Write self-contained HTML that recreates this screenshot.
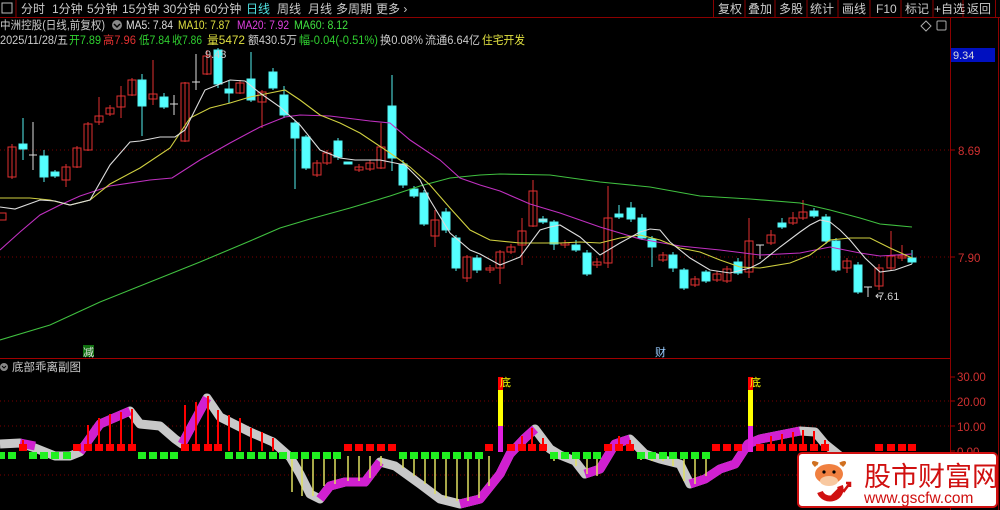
<!DOCTYPE html>
<html><head><meta charset="utf-8"><style>
body{margin:0;background:#000;width:1000px;height:510px;overflow:hidden;font-family:"Liberation Sans","Noto Sans CJK SC",sans-serif}
svg{position:absolute;left:0;top:0}
</style></head><body>
<svg width="1000" height="510" viewBox="0 0 1000 510" xmlns="http://www.w3.org/2000/svg" font-family="Liberation Sans, Noto Sans CJK SC, sans-serif">
<rect width="1000" height="510" fill="#000"/>
<!-- toolbar -->
<line x1="0" y1="17.5" x2="1000" y2="17.5" stroke="#8b0000"/>
<rect x="2" y="3" width="10" height="10" fill="none" stroke="#bbb"/><line x1="16" y1="0" x2="16" y2="17" stroke="#8b0000"/>
<g font-size="12" fill="#ccc">
<text x="21" y="13">分时</text><text x="52" y="13">1分钟</text><text x="87" y="13">5分钟</text><text x="122" y="13">15分钟</text><text x="163" y="13">30分钟</text><text x="204" y="13">60分钟</text>
<text x="246" y="13" fill="#4fe0e0">日线</text><text x="277" y="13">周线</text><text x="308" y="13">月线</text><text x="336" y="13">多周期</text><text x="376" y="13">更多 ›</text>
<g stroke="#8b0000" fill="none"><rect x="713.5" y="-1" width="282" height="18.5"/><line x1="745" y1="0" x2="745" y2="17"/><line x1="775" y1="0" x2="775" y2="17"/><line x1="807" y1="0" x2="807" y2="17"/><line x1="838" y1="0" x2="838" y2="17"/><line x1="870" y1="0" x2="870" y2="17"/><line x1="901" y1="0" x2="901" y2="17"/><line x1="933" y1="0" x2="933" y2="17"/><line x1="963" y1="0" x2="963" y2="17"/></g>
<text x="718" y="13">复权</text><text x="748" y="13">叠加</text><text x="779" y="13">多股</text><text x="810" y="13">统计</text><text x="842" y="13">画线</text><text x="876" y="13">F10</text><text x="905" y="13">标记</text><text x="934" y="13">+自选</text><text x="967" y="13">返回</text>
</g>
<!-- info lines -->
<g font-size="11.5" lengthAdjust="spacingAndGlyphs">
<text x="0" y="29" fill="#ccc" textLength="105" lengthAdjust="spacingAndGlyphs">中洲控股(日线,前复权)</text>
<circle cx="117" cy="25" r="5" fill="#888"/><path d="M114 24l3 3 3-3" stroke="#000" fill="none" stroke-width="1.5"/>
<text x="126" y="29" fill="#ddd" textLength="47" lengthAdjust="spacingAndGlyphs">MA5: 7.84</text><text x="178" y="29" fill="#e0e040" textLength="52" lengthAdjust="spacingAndGlyphs">MA10: 7.87</text><text x="237" y="29" fill="#e040e0" textLength="52" lengthAdjust="spacingAndGlyphs">MA20: 7.92</text><text x="294" y="29" fill="#40e040" textLength="54" lengthAdjust="spacingAndGlyphs">MA60: 8.12</text>
<text x="0" y="44" fill="#ccc" textLength="68" lengthAdjust="spacingAndGlyphs">2025/11/28/五</text>
<text x="69" y="44" fill="#30d030" textLength="32" lengthAdjust="spacingAndGlyphs">开7.89</text><text x="103" y="44" fill="#e03030" textLength="33" lengthAdjust="spacingAndGlyphs">高7.96</text><text x="139" y="44" fill="#30d030" textLength="31" lengthAdjust="spacingAndGlyphs">低7.84</text><text x="172" y="44" fill="#30d030" textLength="30" lengthAdjust="spacingAndGlyphs">收7.86</text><text x="207" y="44" fill="#e0e040" textLength="38" lengthAdjust="spacingAndGlyphs">量5472</text><text x="248" y="44" fill="#ccc" textLength="49" lengthAdjust="spacingAndGlyphs">额430.5万</text><text x="299" y="44" fill="#30d030" textLength="79" lengthAdjust="spacingAndGlyphs">幅-0.04(-0.51%)</text><text x="380" y="44" fill="#ccc" textLength="43" lengthAdjust="spacingAndGlyphs">换0.08%</text><text x="425" y="44" fill="#ccc" textLength="55" lengthAdjust="spacingAndGlyphs">流通6.64亿</text><text x="482" y="44" fill="#e0e040" textLength="43" lengthAdjust="spacingAndGlyphs">住宅开发</text>
</g>
<path d="M921 26l5-5 5 5-5 5z" fill="none" stroke="#aaa"/><rect x="937" y="21" width="9" height="9" rx="1" fill="none" stroke="#aaa"/>
<!-- axis -->
<line x1="950.5" y1="18" x2="950.5" y2="510" stroke="#8b0000"/>
<line x1="998.5" y1="18" x2="998.5" y2="510" stroke="#8b0000"/>
<line x1="0" y1="358.5" x2="950" y2="358.5" stroke="#a00000"/>
<rect x="951" y="48" width="44" height="14" fill="#0010c0"/><text x="953" y="59" font-size="11" fill="#ddd">9.34</text>
<g stroke="#7a0000" stroke-dasharray="1,3"><line x1="0" y1="150" x2="950" y2="150"/><line x1="0" y1="257" x2="950" y2="257"/>
<line x1="0" y1="401" x2="950" y2="401"/><line x1="0" y1="426" x2="950" y2="426"/><line x1="0" y1="475" x2="950" y2="475"/></g>
<g font-size="11.5" fill="#d03030"><text x="958" y="155">8.69</text><text x="958" y="262">7.90</text>
<text x="957" y="381">30.00</text><text x="957" y="406">20.00</text><text x="957" y="431">10.00</text><text x="957" y="456">0.00</text></g>
<g stroke="#a00000"><line x1="950" y1="150" x2="955" y2="150"/><line x1="950" y1="257" x2="955" y2="257"/><line x1="950" y1="377" x2="955" y2="377"/><line x1="950" y1="401" x2="955" y2="401"/><line x1="950" y1="426" x2="955" y2="426"/><line x1="950" y1="451" x2="955" y2="451"/></g>
<!-- candles red hollow -->
<g stroke="#e03030" fill="none" stroke-width="1">
<path d="M12 144v35M66 164v23M77 146v22M88 122v29M99 97v28M110 105v11M121 86v32M132 78v18M153 60v45M185 82v60M207 50v25M240 80v14M262 90v38M317 160v17M327 150v15M359 164v8M370 160v11M381 123v46M435 210v37M467 255v27M490 265v8M500 250v34M511 244v10M522 218v47M533 180v47M565 240v8M597 258v10M608 186v82M663 252v10M695 276v11M717 271v11M727 266v17M749 218v60M771 230v15M793 212v13M803 200v20M847 258v15M879 264v26M891 231v39M902 245v16"/>
<rect x="-2" y="213" width="8" height="7"/><rect x="8" y="147" width="8" height="30"/><rect x="62" y="167" width="8" height="13"/><rect x="73" y="148" width="8" height="19"/><rect x="84" y="124" width="8" height="26"/><rect x="95" y="116" width="8" height="6"/><rect x="106" y="108" width="8" height="6"/><rect x="117" y="96" width="8" height="11"/><rect x="128" y="80" width="8" height="15"/><rect x="149" y="94" width="8" height="5"/><rect x="181" y="83" width="8" height="58"/><rect x="203" y="56" width="8" height="18"/><rect x="236" y="83" width="8" height="10"/><rect x="258" y="92" width="8" height="10"/><rect x="313" y="163" width="8" height="12"/><rect x="323" y="153" width="8" height="10"/><rect x="355" y="167" width="8" height="3"/><rect x="366" y="163" width="8" height="6"/><rect x="377" y="147" width="8" height="21"/><rect x="431" y="220" width="8" height="16"/><rect x="463" y="257" width="8" height="21"/><rect x="486" y="268" width="8" height="2"/><rect x="496" y="252" width="8" height="16"/><rect x="507" y="247" width="8" height="5"/><rect x="518" y="231" width="8" height="14"/><rect x="529" y="191" width="8" height="35"/><rect x="561" y="243" width="8" height="2"/><rect x="593" y="262" width="8" height="3"/><rect x="604" y="218" width="8" height="45"/><rect x="659" y="255" width="8" height="5"/><rect x="691" y="279" width="8" height="6"/><rect x="713" y="274" width="8" height="6"/><rect x="723" y="269" width="8" height="12"/><rect x="745" y="241" width="8" height="31"/><rect x="767" y="235" width="8" height="8"/><rect x="789" y="218" width="8" height="5"/><rect x="799" y="212" width="8" height="6"/><rect x="843" y="261" width="8" height="7"/><rect x="875" y="268" width="8" height="18"/><rect x="887" y="256" width="8" height="12"/><rect x="898" y="256" width="8" height="2"/>
</g>
<!-- cyan -->
<g stroke="#54f0f0" fill="#54ffff">
<path d="M23 118v42M44 150v32M55 170v8M142 74v62M164 93v16M218 48v40M229 80v23M251 52v50M273 68v22M284 86v32M295 120v69M306 135v35M338 138v22M392 75v96M403 160v28M414 186v12M424 190v36M446 208v25M456 235v36M477 255v18M543 216v8M554 220v30M576 240v12M587 250v26M619 205v14M631 202v20M642 214v26M652 236v31M673 252v20M684 268v22M706 270v13M738 258v17M782 218v11M814 208v10M826 214v30M836 238v34M858 262v32M912 250v14"/>
<rect x="19" y="144" width="8" height="5"/><rect x="40" y="156" width="8" height="21"/><rect x="51" y="172" width="8" height="4"/><rect x="138" y="80" width="8" height="26"/><rect x="160" y="97" width="8" height="10"/><rect x="214" y="50" width="8" height="34"/><rect x="225" y="89" width="8" height="4"/><rect x="247" y="79" width="8" height="21"/><rect x="269" y="72" width="8" height="16"/><rect x="280" y="95" width="8" height="20"/><rect x="291" y="123" width="8" height="15"/><rect x="302" y="137" width="8" height="31"/><rect x="334" y="141" width="8" height="16"/><rect x="344" y="162" width="8" height="2"/><rect x="388" y="106" width="8" height="52"/><rect x="399" y="164" width="8" height="21"/><rect x="410" y="189" width="8" height="7"/><rect x="420" y="193" width="8" height="31"/><rect x="442" y="212" width="8" height="18"/><rect x="452" y="238" width="8" height="30"/><rect x="473" y="258" width="8" height="12"/><rect x="539" y="219" width="8" height="3"/><rect x="550" y="222" width="8" height="22"/><rect x="572" y="245" width="8" height="5"/><rect x="583" y="253" width="8" height="21"/><rect x="615" y="214" width="8" height="3"/><rect x="627" y="208" width="8" height="11"/><rect x="638" y="218" width="8" height="20"/><rect x="648" y="239" width="8" height="8"/><rect x="669" y="255" width="8" height="13"/><rect x="680" y="270" width="8" height="18"/><rect x="702" y="272" width="8" height="9"/><rect x="734" y="262" width="8" height="11"/><rect x="778" y="223" width="8" height="4"/><rect x="810" y="211" width="8" height="5"/><rect x="822" y="217" width="8" height="24"/><rect x="832" y="241" width="8" height="29"/><rect x="854" y="265" width="8" height="27"/><rect x="908" y="258" width="8" height="4"/>
</g>
<g stroke="#ddd"><path d="M29 155h8M33 122v48M170 104h8M174 95v20M192 82h8M196 54v36M539 220h8M756 245h8M760 245v14M864 287h8M868 287v10"/></g>
<text x="205" y="58" font-size="11" fill="#ccc">9.43</text>
<path d="M882 296l-6 0m2 -2l-2 2 2 2" stroke="#ccc" fill="none"/><text x="878" y="300" font-size="11" fill="#ccc">7.61</text>
<!-- MAs -->
<g fill="none" stroke-width="1.1">
<polyline stroke="#40c040" points="0,340 50,325 100,302 130,290 160,278 200,262 250,241 280,228 310,219 350,208 390,196 420,186 450,178 480,175 500,174 550,175 600,182 650,187 700,196 750,199 800,203 830,210 860,218 880,224 912,227"/>
<polyline stroke="#c030c0" points="0,250 20,232 40,215 60,205 80,196 110,186 150,180 172,178 200,160 230,143 260,127 285,117 300,115 330,116 370,121 390,123 410,140 440,160 460,178 480,185 500,191 530,204 560,213 600,227 640,239 680,246 720,250 760,255 800,253 830,247 860,253 880,256 912,254"/>
<polyline stroke="#d0d040" points="0,198 30,198 50,200 70,205 90,200 110,184 140,168 170,148 190,118 210,108 230,103 250,97 270,93 285,90 300,100 320,115 340,123 360,133 390,153 410,167 430,185 450,208 470,230 490,240 520,243 540,243 560,243 580,242 600,243 620,238 640,235 660,240 680,248 700,252 720,260 740,267 760,268 790,263 810,255 830,240 850,238 870,238 890,248 912,258"/>
<polyline stroke="#ddd" points="0,207 15,209 40,200 55,201 70,205 90,200 110,165 130,142 140,141 160,137 175,137 185,130 205,90 230,80 245,81 260,93 280,107 300,125 320,150 340,158 355,160 380,160 395,163 405,165 420,180 430,200 450,233 470,250 480,254 500,265 520,257 540,230 550,227 560,225 580,237 600,255 620,243 640,232 650,229 660,230 670,242 690,258 710,270 730,273 750,268 760,263 780,247 800,232 810,225 820,220 830,222 840,230 850,240 865,258 880,272 895,270 912,264"/>
</g>
<rect x="83" y="345" width="11" height="12" fill="#107010"/><text x="83" y="356" font-size="11" fill="#ddd">减</text>
<text x="655" y="356" font-size="11" fill="#9cf">财</text>
<!-- sub chart -->
<circle cx="4" cy="367" r="4" fill="#888"/><path d="M2 366l2 2 2-2" stroke="#000" fill="none"/>
<text x="12" y="371" font-size="11.5" fill="#ccc">底部乖离副图</text>
<polyline fill="none" stroke="#c8c8c8" stroke-width="9" stroke-linejoin="round" points="0,444 20,443 35,448 55,456 70,456 80,452 100,424 130,411 140,424 160,426 175,439 182,444 207,398 220,417 250,432 273,442 290,457 300,474 310,494 320,499 330,486 345,482 365,482 380,462 395,466 420,484 440,499 460,504 480,499 500,474 510,454 525,438 535,429 550,449 560,455 575,461 585,474 600,469 615,444 630,439 645,454 660,459 680,464 690,484 705,479 720,469 735,464 748,444 760,439 785,434 800,431 815,432 825,444 840,456 850,459"/>
<g fill="none" stroke="#d020d0" stroke-width="9" stroke-linejoin="round">
<polyline points="20,443 35,446"/><polyline points="80,452 100,424 130,411"/><polyline points="182,444 207,398"/><polyline points="320,499 330,486 345,482 365,482 380,462"/><polyline points="460,504 480,499 500,474 510,454 525,438 535,429"/><polyline points="585,474 600,469 615,444 630,439"/><polyline points="690,484 705,479 720,469 735,464 748,444 760,439 785,434 800,431"/>
</g>
<g stroke="#f00" stroke-width="2"><path d="M23 440v11M88 425v26M99 418v33M110 414v37M121 412v39M132 409v42M185 405v46M196 402v49M208 396v55M218 410v41M229 415v36M240 418v33M251 428v23M262 432v19M273 438v13M511 448v3M522 436v15M532 428v23M543 438v13M608 446v5M619 436v15M630 440v11M716 448v3M727 448v3M771 436v15M782 434v17M793 432v19M803 430v21M814 431v20M825 440v11"/></g>
<g stroke="#e0e060" stroke-width="1.5"><path d="M292 456v36M302 456v40M313 456v40M324 456v30M335 456v28M348 456v25M359 456v25M370 456v22M381 456v10M403 456v12M414 456v20M425 456v28M435 456v38M446 456v42M457 456v45M468 456v45M479 456v42M489 456v30M554 456v5M576 456v10M587 456v18M597 456v20M641 456v4M652 456v5M663 456v5M673 456v10M684 456v25M695 456v28M706 456v20"/></g>
<g fill="#f00"><rect x="19" y="444" width="8" height="7"/><rect x="73" y="444" width="8" height="7"/><rect x="84" y="444" width="8" height="7"/><rect x="95" y="444" width="8" height="7"/><rect x="106" y="444" width="8" height="7"/><rect x="117" y="444" width="8" height="7"/><rect x="128" y="444" width="8" height="7"/><rect x="181" y="444" width="8" height="7"/><rect x="192" y="444" width="8" height="7"/><rect x="204" y="444" width="8" height="7"/><rect x="214" y="444" width="8" height="7"/><rect x="344" y="444" width="8" height="7"/><rect x="355" y="444" width="8" height="7"/><rect x="366" y="444" width="8" height="7"/><rect x="377" y="444" width="8" height="7"/><rect x="388" y="444" width="8" height="7"/><rect x="485" y="444" width="8" height="7"/><rect x="507" y="444" width="8" height="7"/><rect x="518" y="444" width="8" height="7"/><rect x="528" y="444" width="8" height="7"/><rect x="539" y="444" width="8" height="7"/><rect x="604" y="444" width="8" height="7"/><rect x="615" y="444" width="8" height="7"/><rect x="626" y="444" width="8" height="7"/><rect x="712" y="444" width="8" height="7"/><rect x="723" y="444" width="8" height="7"/><rect x="734" y="444" width="8" height="7"/><rect x="756" y="444" width="8" height="7"/><rect x="767" y="444" width="8" height="7"/><rect x="778" y="444" width="8" height="7"/><rect x="789" y="444" width="8" height="7"/><rect x="799" y="444" width="8" height="7"/><rect x="810" y="444" width="8" height="7"/><rect x="821" y="444" width="8" height="7"/><rect x="875" y="444" width="8" height="7"/><rect x="887" y="444" width="8" height="7"/><rect x="898" y="444" width="8" height="7"/><rect x="908" y="444" width="8" height="7"/></g>
<g fill="#20f020"><rect x="-3" y="452" width="8" height="7"/><rect x="8" y="452" width="8" height="7"/><rect x="29" y="452" width="8" height="7"/><rect x="40" y="452" width="8" height="7"/><rect x="51" y="452" width="8" height="7"/><rect x="63" y="452" width="8" height="7"/><rect x="138" y="452" width="8" height="7"/><rect x="149" y="452" width="8" height="7"/><rect x="160" y="452" width="8" height="7"/><rect x="170" y="452" width="8" height="7"/><rect x="225" y="452" width="8" height="7"/><rect x="236" y="452" width="8" height="7"/><rect x="247" y="452" width="8" height="7"/><rect x="258" y="452" width="8" height="7"/><rect x="269" y="452" width="8" height="7"/><rect x="279" y="452" width="8" height="7"/><rect x="290" y="452" width="8" height="7"/><rect x="301" y="452" width="8" height="7"/><rect x="312" y="452" width="8" height="7"/><rect x="323" y="452" width="8" height="7"/><rect x="333" y="452" width="8" height="7"/><rect x="399" y="452" width="8" height="7"/><rect x="410" y="452" width="8" height="7"/><rect x="421" y="452" width="8" height="7"/><rect x="431" y="452" width="8" height="7"/><rect x="442" y="452" width="8" height="7"/><rect x="453" y="452" width="8" height="7"/><rect x="464" y="452" width="8" height="7"/><rect x="475" y="452" width="8" height="7"/><rect x="550" y="452" width="8" height="7"/><rect x="561" y="452" width="8" height="7"/><rect x="572" y="452" width="8" height="7"/><rect x="583" y="452" width="8" height="7"/><rect x="593" y="452" width="8" height="7"/><rect x="637" y="452" width="8" height="7"/><rect x="648" y="452" width="8" height="7"/><rect x="659" y="452" width="8" height="7"/><rect x="669" y="452" width="8" height="7"/><rect x="680" y="452" width="8" height="7"/><rect x="691" y="452" width="8" height="7"/><rect x="702" y="452" width="8" height="7"/></g>
<g><rect x="498" y="377" width="5" height="13" fill="#f00"/><rect x="498" y="390" width="5" height="36" fill="#ff0"/><rect x="498" y="426" width="5" height="26" fill="#e020e0"/>
<rect x="748" y="377" width="5" height="13" fill="#f00"/><rect x="748" y="390" width="5" height="36" fill="#ff0"/><rect x="748" y="426" width="5" height="26" fill="#e020e0"/></g>
<text x="500" y="386" font-size="11" fill="#ff0">底</text><text x="750" y="386" font-size="11" fill="#ff0">底</text>
<!-- logo -->
<rect x="798" y="453" width="199" height="54" rx="4" fill="#fff" stroke="#d01010" stroke-width="2"/>
<g transform="translate(812,462)">
<path d="M4 4q-6 -6 2 -2M30 4q6 -6 -2 -2" stroke="#d07020" stroke-width="3" fill="none"/>
<ellipse cx="17" cy="12" rx="14" ry="10" fill="#f08040"/>
<ellipse cx="17" cy="19" rx="9" ry="5" fill="#f8c8a0"/>
<circle cx="12" cy="10" r="1.6" fill="#000"/><circle cx="22" cy="10" r="1.6" fill="#000"/>
<path d="M8 30a10 9 0 1 0 20 -6" stroke="#d01010" stroke-width="6" fill="none"/>
<path d="M20 34l8 -8 4 3 6 -8m-4 0h4v4" stroke="#d01010" stroke-width="2.5" fill="none"/>
</g>
<text x="864" y="486" font-size="27" fill="#d01010" font-family="Noto Sans CJK SC, sans-serif">股市财富网</text>
<text x="864" y="503" font-size="15.5" fill="#d01010" font-family="Liberation Sans, sans-serif">www.gscfw.com</text>
</svg>
</body></html>
